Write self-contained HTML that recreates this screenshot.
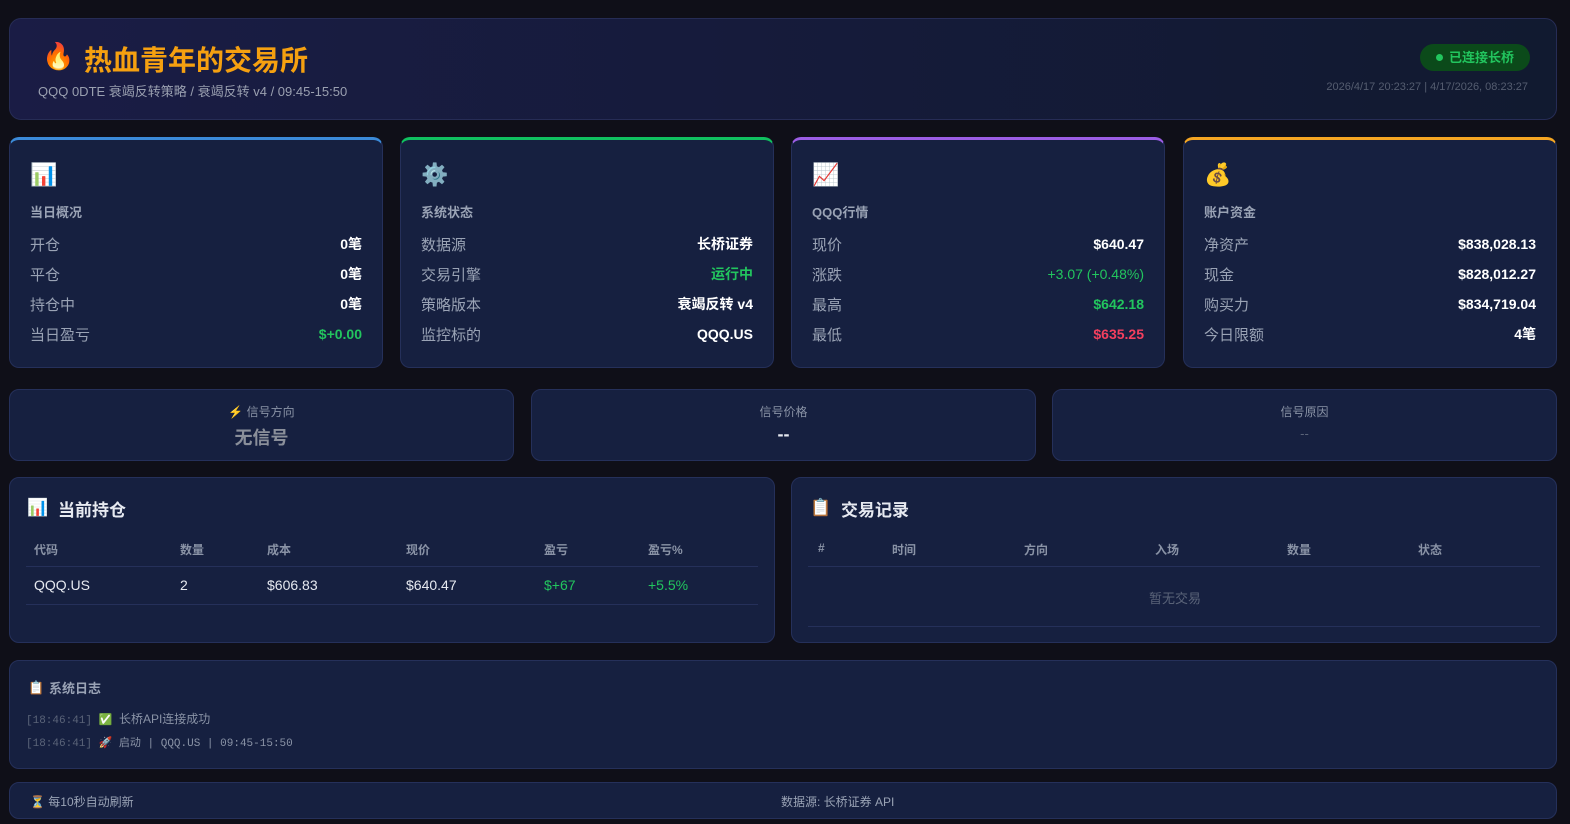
<!DOCTYPE html>
<html><head><meta charset="utf-8"><style>
*{margin:0;padding:0;box-sizing:border-box}
body{width:1570px;height:824px;background:#0f0f18;font-family:"Liberation Sans","Noto Sans CJK SC",sans-serif;color:#e6e9f0;position:relative;overflow:hidden}
.box{position:absolute;background:#162040;border:1px solid #25305a;border-radius:10px}
.ab{position:absolute;white-space:nowrap}
.card .lbl{position:absolute;left:20px;top:62px;font-size:13px;font-weight:bold;color:#9aa3b5}
.card .ic{position:absolute;left:20px;top:22px;font-size:22px}
.row{position:absolute;left:20px;right:20px;height:20px;font-size:15px;display:flex;justify-content:space-between;align-items:center}
.row span:first-child{color:#9aa3b5}
.row span:last-child{font-weight:bold;color:#fff;font-size:14px}
.g{color:#22c55e!important}.r{color:#f43f5e!important}
.sig{text-align:center}
.th{font-size:12px;font-weight:bold;color:#8a93a6;position:absolute}
.td{font-size:14px;color:#e6e9f0;position:absolute}
.mono{font-family:"Liberation Mono","Noto Sans CJK SC",monospace;font-size:11px;color:#5a6378}
</style></head><body>

<div class="box" style="left:9px;top:18px;width:1548px;height:102px;background:linear-gradient(90deg,#1a1c45,#111a30);border-color:#262c55;border-radius:12px">
  <div class="ab" style="left:32px;top:22px;font-size:26px">🔥</div>
  <div class="ab" style="left:74px;top:20px;font-size:28px;font-weight:bold;color:#f5a010">热血青年的交易所</div>
  <div class="ab" style="left:28px;top:62px;font-size:13px;color:#9aa0b0">QQQ 0DTE 衰竭反转策略 / 衰竭反转 v4 / 09:45-15:50</div>
  <div class="ab" style="left:1410px;top:25px;width:110px;height:27px;border-radius:14px;background:#0b4a1a;color:#22c55e;font-size:13px;font-weight:bold;line-height:27px;text-align:center"><span style="display:inline-block;width:7px;height:7px;border-radius:50%;background:#22c55e;margin-right:6px;vertical-align:1px"></span>已连接长桥</div>
  <div class="ab" style="right:28px;top:62px;font-size:11px;color:#555d70">2026/4/17 20:23:27 | 4/17/2026, 08:23:27</div>
</div>

<div class="box card" style="left:9px;top:137px;width:374px;height:231px;border-top:3px solid #3b8ad8">
  <div class="ic">📊</div><div class="lbl">当日概况</div>
  <div class="row" style="top:94px"><span>开仓</span><span>0笔</span></div>
  <div class="row" style="top:124px"><span>平仓</span><span>0笔</span></div>
  <div class="row" style="top:154px"><span>持仓中</span><span>0笔</span></div>
  <div class="row" style="top:184px"><span>当日盈亏</span><span class="g">$+0.00</span></div>
</div>
<div class="box card" style="left:400px;top:137px;width:374px;height:231px;border-top:3px solid #10c060">
  <div class="ic">⚙️</div><div class="lbl">系统状态</div>
  <div class="row" style="top:94px"><span>数据源</span><span>长桥证券</span></div>
  <div class="row" style="top:124px"><span>交易引擎</span><span class="g">运行中</span></div>
  <div class="row" style="top:154px"><span>策略版本</span><span>衰竭反转 v4</span></div>
  <div class="row" style="top:184px"><span>监控标的</span><span>QQQ.US</span></div>
</div>
<div class="box card" style="left:791px;top:137px;width:374px;height:231px;border-top:3px solid #9b5de5">
  <div class="ic">📈</div><div class="lbl">QQQ行情</div>
  <div class="row" style="top:94px"><span>现价</span><span>$640.47</span></div>
  <div class="row" style="top:124px"><span>涨跌</span><span class="g" style="font-weight:normal">+3.07 (+0.48%)</span></div>
  <div class="row" style="top:154px"><span>最高</span><span class="g">$642.18</span></div>
  <div class="row" style="top:184px"><span>最低</span><span class="r">$635.25</span></div>
</div>
<div class="box card" style="left:1183px;top:137px;width:374px;height:231px;border-top:3px solid #f5a623">
  <div class="ic">💰</div><div class="lbl">账户资金</div>
  <div class="row" style="top:94px"><span>净资产</span><span>$838,028.13</span></div>
  <div class="row" style="top:124px"><span>现金</span><span>$828,012.27</span></div>
  <div class="row" style="top:154px"><span>购买力</span><span>$834,719.04</span></div>
  <div class="row" style="top:184px"><span>今日限额</span><span>4笔</span></div>
</div>

<div class="box sig" style="left:9px;top:389px;width:505px;height:72px">
  <div style="margin-top:13px;font-size:12px;color:#8a93a6"><span style="color:#f97316">⚡</span> 信号方向</div>
  <div style="margin-top:4px;font-size:18px;font-weight:bold;color:#8a8f9a">无信号</div>
</div>
<div class="box sig" style="left:531px;top:389px;width:505px;height:72px">
  <div style="margin-top:13px;font-size:12px;color:#8a93a6">信号价格</div>
  <div style="margin-top:4px;font-size:18px;font-weight:bold;color:#e6e9f0">--</div>
</div>
<div class="box sig" style="left:1052px;top:389px;width:505px;height:72px">
  <div style="margin-top:13px;font-size:12px;color:#8a93a6">信号原因</div>
  <div style="margin-top:6px;font-size:13px;color:#5a6378">--</div>
</div>

<div class="box" style="left:9px;top:477px;width:766px;height:166px">
  <div class="ab" style="left:17px;top:20px;font-size:17px">📊</div>
  <div class="ab" style="left:48px;top:18px;font-size:17px;font-weight:bold">当前持仓</div>
  <div class="th" style="left:24px;top:63px">代码</div><div class="th" style="left:170px;top:63px">数量</div><div class="th" style="left:257px;top:63px">成本</div><div class="th" style="left:396px;top:63px">现价</div><div class="th" style="left:534px;top:63px">盈亏</div><div class="th" style="left:638px;top:63px">盈亏%</div>
  <div class="ab" style="left:16px;top:88px;width:732px;height:1px;background:#25305a"></div>
  <div class="td" style="left:24px;top:99px">QQQ.US</div><div class="td" style="left:170px;top:99px">2</div><div class="td" style="left:257px;top:99px">$606.83</div><div class="td" style="left:396px;top:99px">$640.47</div><div class="td g" style="left:534px;top:99px">$+67</div><div class="td g" style="left:638px;top:99px">+5.5%</div>
  <div class="ab" style="left:16px;top:126px;width:732px;height:1px;background:#25305a"></div>
</div>

<div class="box" style="left:791px;top:477px;width:766px;height:166px">
  <div class="ab" style="left:18px;top:20px;font-size:17px">📋</div>
  <div class="ab" style="left:49px;top:18px;font-size:17px;font-weight:bold">交易记录</div>
  <div class="th" style="left:26px;top:63px">#</div><div class="th" style="left:100px;top:63px">时间</div><div class="th" style="left:232px;top:63px">方向</div><div class="th" style="left:363px;top:63px">入场</div><div class="th" style="left:495px;top:63px">数量</div><div class="th" style="left:626px;top:63px">状态</div>
  <div class="ab" style="left:16px;top:88px;width:732px;height:1px;background:#25305a"></div>
  <div class="ab" style="left:0;width:766px;top:110px;text-align:center;font-size:13px;color:#5a6378">暂无交易</div>
  <div class="ab" style="left:16px;top:148px;width:732px;height:1px;background:#25305a"></div>
</div>

<div class="box" style="left:9px;top:660px;width:1548px;height:109px">
  <div class="ab" style="left:18px;top:19px;font-size:13px">📋</div>
  <div class="ab" style="left:39px;top:17px;font-size:13px;font-weight:bold;color:#9aa3b5">系统日志</div>
  <div class="ab mono" style="left:16px;top:49px">[18:46:41] <span style="font-family:'Noto Sans CJK SC',sans-serif">✅</span> <span style="color:#8a93a6;font-family:'Liberation Sans','Noto Sans CJK SC',sans-serif;font-size:12px">长桥API连接成功</span></div>
  <div class="ab mono" style="left:16px;top:73px">[18:46:41] 🚀 <span style="color:#8a93a6">启动 | QQQ.US | 09:45-15:50</span></div>
</div>

<div class="box" style="left:9px;top:782px;width:1548px;height:37px">
  <div class="ab" style="left:20px;top:10px;font-size:12px;color:#9aa3b5">⏳ 每10秒自动刷新</div>
  <div class="ab" style="left:771px;top:10px;font-size:12px;color:#9aa3b5">数据源: 长桥证券 API</div>
</div>
</body></html>
